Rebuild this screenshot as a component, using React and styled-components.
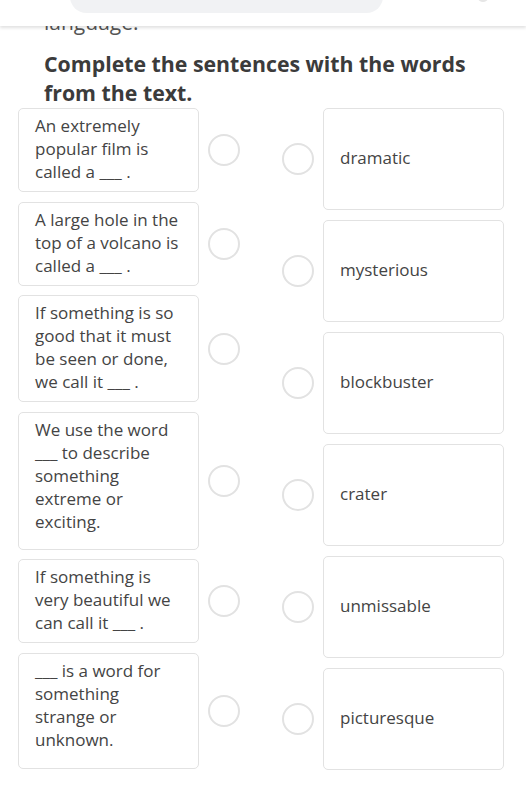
import styled, { createGlobalStyle } from "styled-components";

const GlobalStyle = createGlobalStyle`
  body {
    margin: 0;
    background: #fff;
    font-family: "Open Sans", "Noto Sans", sans-serif;
  }
`;

const prompts = [
  { text: "An extremely popular film is called a ___ .", minH: 84 },
  { text: "A large hole in the top of a volcano is called a ___ .", minH: 84 },
  { text: "If something is so good that it must be seen or done, we call it ___ .", minH: 107 },
  { text: "We use the word ___ to describe something extreme or exciting.", minH: 138 },
  { text: "If something is very beautiful we can call it ___ .", minH: 84 },
  { text: "___ is a word for something strange or unknown.", minH: 116 },
];

const answers = ["dramatic", "mysterious", "blockbuster", "crater", "unmissable", "picturesque"];

function App() {
  return (
    <Page>
      <GlobalStyle />
      <TopBar>
        <SearchPill />
        <CornerBit />
      </TopBar>
      <Intro>language.</Intro>
      <Heading>Complete the sentences with the words from the text.</Heading>
      <Board>
        <Column $gap={9.5}>
          {prompts.map((p) => (
            <Row key={p.text}>
              <Card $minH={p.minH} $align="flex-start">{p.text}</Card>
              <Radio />
            </Row>
          ))}
        </Column>
        <Column $gap={10}>
          {answers.map((a) => (
            <Row key={a}>
              <Radio />
              <Card $minH={102} $align="center">{a}</Card>
            </Row>
          ))}
        </Column>
      </Board>
    </Page>
  );
}

const Page = styled.div`
  position: relative;
  width: 526px;
  min-height: 804px;
  padding-top: 8px;
  box-sizing: border-box;
`;

const TopBar = styled.div`
  position: absolute;
  top: 0;
  left: 0;
  right: 0;
  height: 26px;
  background: #fff;
  box-shadow: 0 2px 3px rgba(0, 0, 0, 0.12);
  z-index: 2;
`;

const SearchPill = styled.div`
  position: absolute;
  left: 70px;
  top: -20px;
  width: 313px;
  height: 33px;
  border-radius: 17px;
  background: #f1f2f4;
`;

const CornerBit = styled.div`
  position: absolute;
  right: 38px;
  top: -6px;
  width: 10px;
  height: 8px;
  border-radius: 50%;
  background: #e6e6e6;
`;

const Intro = styled.p`
  margin: 0;
  padding-left: 44px;
  font-size: 21px;
  line-height: 29px;
  color: #555;
`;

const Heading = styled.h2`
  margin: 11.5px 0 0;
  padding: 0 30px 0 44px;
  font-size: 21.3px;
  font-weight: 700;
  line-height: 29px;
  color: #3b3b3b;
`;

const Board = styled.div`
  display: flex;
  justify-content: space-between;
  padding: 1.5px 22px 0 18px;
`;

const Column = styled.div`
  display: flex;
  flex-direction: column;
  gap: ${(p) => p.$gap}px;
`;

const Row = styled.div`
  display: flex;
  align-items: center;
  gap: 9px;
`;

const Card = styled.div`
  width: 181px;
  min-height: ${(p) => p.$minH}px;
  box-sizing: border-box;
  display: flex;
  align-items: ${(p) => p.$align};
  padding: 5px 17px 8px 16px;
  border: 1px solid #e2e2e2;
  border-radius: 5px;
  background: #fff;
  font-size: 17px;
  line-height: 23px;
  color: #444;
`;

const Radio = styled.span`
  width: 32px;
  height: 32px;
  box-sizing: border-box;
  border: 2.5px solid #e2e2e2;
  border-radius: 50%;
  flex-shrink: 0;
`;

export default App;
